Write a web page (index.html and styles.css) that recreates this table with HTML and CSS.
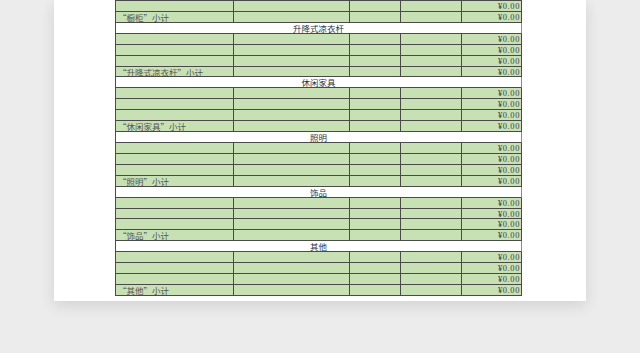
FILE: index.html
```html
<!DOCTYPE html>
<html lang="zh-CN">
<head>
<meta charset="utf-8">
<link rel="stylesheet" href="styles.css">
</head>
<body>
<div class="page">
  <div class="sheet">
    <div class="row"><span class="c"></span><span class="c"></span><span class="c"></span><span class="c"></span><span class="c amt">¥0.00</span></div>
    <div class="row"><span class="c label">“橱柜”小计</span><span class="c"></span><span class="c"></span><span class="c"></span><span class="c amt">¥0.00</span></div>

    <div class="head">升降式凉衣杆</div>
    <div class="row"><span class="c"></span><span class="c"></span><span class="c"></span><span class="c"></span><span class="c amt">¥0.00</span></div>
    <div class="row"><span class="c"></span><span class="c"></span><span class="c"></span><span class="c"></span><span class="c amt">¥0.00</span></div>
    <div class="row"><span class="c"></span><span class="c"></span><span class="c"></span><span class="c"></span><span class="c amt">¥0.00</span></div>
    <div class="row"><span class="c label">“升降式凉衣杆”小计</span><span class="c"></span><span class="c"></span><span class="c"></span><span class="c amt">¥0.00</span></div>

    <div class="head">休闲家具</div>
    <div class="row"><span class="c"></span><span class="c"></span><span class="c"></span><span class="c"></span><span class="c amt">¥0.00</span></div>
    <div class="row"><span class="c"></span><span class="c"></span><span class="c"></span><span class="c"></span><span class="c amt">¥0.00</span></div>
    <div class="row"><span class="c"></span><span class="c"></span><span class="c"></span><span class="c"></span><span class="c amt">¥0.00</span></div>
    <div class="row"><span class="c label">“休闲家具”小计</span><span class="c"></span><span class="c"></span><span class="c"></span><span class="c amt">¥0.00</span></div>

    <div class="head">照明</div>
    <div class="row"><span class="c"></span><span class="c"></span><span class="c"></span><span class="c"></span><span class="c amt">¥0.00</span></div>
    <div class="row"><span class="c"></span><span class="c"></span><span class="c"></span><span class="c"></span><span class="c amt">¥0.00</span></div>
    <div class="row"><span class="c"></span><span class="c"></span><span class="c"></span><span class="c"></span><span class="c amt">¥0.00</span></div>
    <div class="row"><span class="c label">“照明”小计</span><span class="c"></span><span class="c"></span><span class="c"></span><span class="c amt">¥0.00</span></div>

    <div class="head">饰品</div>
    <div class="row"><span class="c"></span><span class="c"></span><span class="c"></span><span class="c"></span><span class="c amt">¥0.00</span></div>
    <div class="row"><span class="c"></span><span class="c"></span><span class="c"></span><span class="c"></span><span class="c amt">¥0.00</span></div>
    <div class="row"><span class="c"></span><span class="c"></span><span class="c"></span><span class="c"></span><span class="c amt">¥0.00</span></div>
    <div class="row"><span class="c label">“饰品”小计</span><span class="c"></span><span class="c"></span><span class="c"></span><span class="c amt">¥0.00</span></div>

    <div class="head">其他</div>
    <div class="row"><span class="c"></span><span class="c"></span><span class="c"></span><span class="c"></span><span class="c amt">¥0.00</span></div>
    <div class="row"><span class="c"></span><span class="c"></span><span class="c"></span><span class="c"></span><span class="c amt">¥0.00</span></div>
    <div class="row"><span class="c"></span><span class="c"></span><span class="c"></span><span class="c"></span><span class="c amt">¥0.00</span></div>
    <div class="row"><span class="c label">“其他”小计</span><span class="c"></span><span class="c"></span><span class="c"></span><span class="c amt">¥0.00</span></div>
  </div>
</div>
</body>
</html>
```
FILE: styles.css
```css
html, body {
  margin: 0;
  padding: 0;
}
body {
  width: 640px;
  height: 353px;
  overflow: hidden;
  background: #ececec;
  font-family: "Noto Sans CJK SC", "Liberation Serif", sans-serif;
}
.page {
  box-sizing: border-box;
  margin-left: 54px;
  width: 532px;
  height: 301px;
  padding-left: 61px;
  background: #ffffff;
  box-shadow: 0 5px 14px rgba(0, 0, 0, 0.11);
}
.sheet {
  width: 407px;
  box-sizing: border-box;
  border-left: 1px solid #4a4a4a;
  border-top: 1px solid #4a4a4a;
}
.row {
  display: grid;
  grid-template-columns: 118px 116px 51px 61px 60px;
  height: 10.93px;
  box-sizing: border-box;
  border-bottom: 1px solid #4a4a4a;
  background: #c7e0b4;
}
.c {
  box-sizing: border-box;
  border-right: 1px solid #4a4a4a;
  font-size: 8.5px;
  line-height: 10px;
  color: #444;
  white-space: nowrap;
  overflow: hidden;
}
.label {
  padding-left: 2px;
  color: #555;
}
.amt {
  text-align: right;
  padding-right: 1px;
  font-family: "Liberation Serif", serif;
  font-size: 8.5px;
  letter-spacing: 0.6px;
  color: #444;
}
.head {
  height: 10.93px;
  box-sizing: border-box;
  border-bottom: 1px solid #4a4a4a;
  border-right: 1px solid #8a8a8a;
  background: #ffffff;
  text-align: center;
  font-size: 8.5px;
  line-height: 11px;
  color: #333;
  overflow: hidden;
}
```
